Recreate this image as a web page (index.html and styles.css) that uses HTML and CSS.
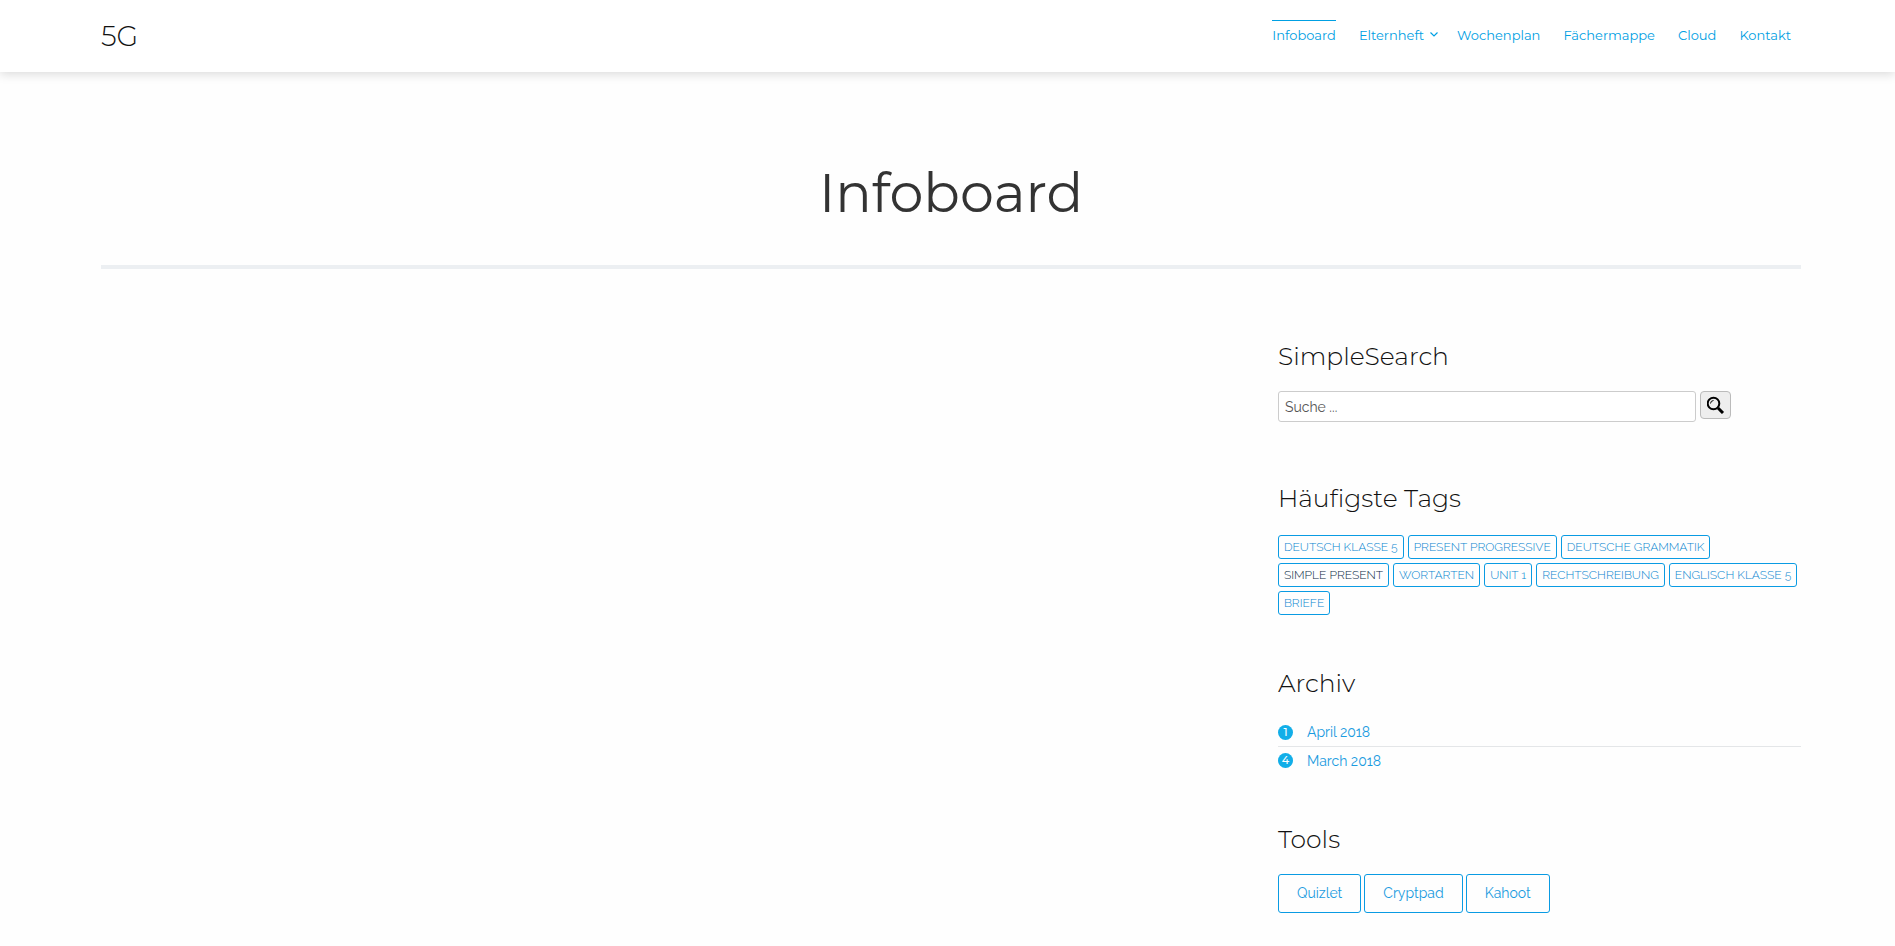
FILE: index.html
```html
<!DOCTYPE html>
<html lang="de">

<head>
  <meta charset="UTF-8" />
  <meta name="viewport" content="width=device-width, initial-scale=1.0" />
  <title>Infoboard - 5G</title>
  <link rel="stylesheet" href="styles.css">
</head>

<body>
  <header class="header">
    <a class="logo" href="#">5G</a>
    <nav class="nav">
      <a class="active" href="#">Infoboard</a>
      <a class="has-menu" href="#">Elternheft
        <svg class="chevron" viewBox="0 0 8 6" width="8" height="6">
          <path d="M.5 .5l3.5 3.5 3.5-3.5" fill="none" stroke="currentColor" stroke-width="1.2" />
        </svg>
      </a>
      <a href="#">Wochenplan</a>
      <a href="#">Fächermappe</a>
      <a href="#">Cloud</a>
      <a href="#">Kontakt</a>
    </nav>
  </header>

  <div class="container">
    <h1 class="page-title">Infoboard</h1>

    <div class="columns">
      <main class="content"></main>

      <aside class="sidebar">
        <section class="widget">
          <h2>SimpleSearch</h2>
          <form class="search">
            <input type="text" placeholder="Suche ..." aria-label="Suche">
            <button type="submit" aria-label="Suchen">
              <svg viewBox="0 0 18 18" width="18" height="18">
                <circle cx="6.5" cy="7.5" r="5.8" fill="none" stroke="#000" stroke-width="2" />
                <path d="M3.5 7.5a3.2 3.2 0 0 1 3-3" fill="none" stroke="#000" stroke-width="1" />
                <path d="M11 12l5 5" stroke="#000" stroke-width="3" />
              </svg>
            </button>
          </form>
        </section>

        <section class="widget">
          <h2>Häufigste Tags</h2>
          <div class="tags">
            <a href="#">Deutsch Klasse 5</a>
            <a href="#">Present Progressive</a>
            <a href="#">Deutsche Grammatik</a>
            <a class="current" href="#">Simple Present</a>
            <a href="#">Wortarten</a>
            <a href="#">Unit 1</a>
            <a href="#">Rechtschreibung</a>
            <a href="#">Englisch Klasse 5</a>
            <a href="#">Briefe</a>
          </div>
        </section>

        <section class="widget">
          <h2>Archiv</h2>
          <ul class="archive">
            <li><span class="count">1</span><a href="#">April 2018</a></li>
            <li><span class="count">4</span><a href="#">March 2018</a></li>
          </ul>
        </section>

        <section class="widget">
          <h2>Tools</h2>
          <div class="tools">
            <a href="#">Quizlet</a>
            <a href="#">Cryptpad</a>
            <a href="#">Kahoot</a>
          </div>
        </section>
      </aside>
    </div>
  </div>
</body>

</html>
```

FILE: styles.css
```css
* {
  box-sizing: border-box;
  margin: 0;
  padding: 0;
}

body {
  background-color: #fefefe;
  color: #111;
  font-family: Raleway, Lato, sans-serif;
  font-size: 14px;
  line-height: 20px;
}

a {
  color: #1a9be0;
  text-decoration: none;
}

.header {
  display: flex;
  justify-content: space-between;
  align-items: center;
  height: 72px;
  padding: 0 104px 0 101px;
  background-color: #fff;
  box-shadow: 0 2px 10px rgba(0, 0, 0, 0.15);
}

.logo {
  color: #111;
  font-family: Montserrat, Inter, sans-serif;
  font-size: 28px;
  font-weight: 300;
}

.nav {
  display: flex;
  gap: 23px;
  padding-bottom: 4px;
  font-family: Montserrat, Inter, sans-serif;
  font-size: 13px;
  line-height: 28px;
}

.nav a {
  color: #00a0e3;
  border-top: 1px solid transparent;
}

.nav a.active {
  border-top-color: #00a0e3;
}

.has-menu {
  display: flex;
  align-items: center;
  gap: 6px;
  margin-right: -4px;
}

.container {
  padding: 0 94px 0 101px;
}

.page-title {
  padding: 81px 0 32px;
  border-bottom: 4px solid #eceff2;
  color: #333;
  font-family: Montserrat, Inter, sans-serif;
  font-size: 54px;
  font-weight: 400;
  line-height: 80px;
  text-align: center;
}

.columns {
  display: grid;
  grid-template-columns: 9fr 4fr;
  padding-top: 71px;
}

.widget + .widget {
  margin-top: 49px;
}

.widget h2 {
  margin-bottom: 19px;
  font-family: Montserrat, Inter, sans-serif;
  font-size: 25px;
  font-variant-ligatures: none;
  font-weight: 300;
  line-height: 32px;
}

.search {
  display: flex;
  align-items: flex-start;
  gap: 4px;
  padding-bottom: 11px;
}

.search input {
  width: 80%;
  height: 31px;
  padding: 0 6px;
  border: 1px solid #ccc;
  border-radius: 3px;
  background-color: #fff;
  font-family: inherit;
  font-size: 14px;
}

.search input::placeholder {
  color: #555;
}

.search button {
  display: flex;
  align-items: center;
  justify-content: center;
  width: 31px;
  height: 28px;
  border: 1px solid #bbb;
  border-radius: 4px;
  background-color: #eee;
  cursor: pointer;
}

.tags {
  display: flex;
  flex-wrap: wrap;
  gap: 4px;
  padding: 2px 0 3px;
}

.tags a {
  padding: 0 5px;
  border: 1px solid #0a9be3;
  border-radius: 3px;
  color: #0a86d0;
  font-size: 12px;
  font-weight: 300;
  line-height: 22px;
  text-transform: uppercase;
}

.tags a.current {
  color: #0a2a44;
}

.archive {
  list-style: none;
}

.archive li {
  display: flex;
  align-items: center;
  gap: 14px;
  height: 28px;
}

.archive li + li {
  border-top: 1px solid #e4e6e8;
}

.count {
  width: 15px;
  border-radius: 50%;
  background-color: #12aee8;
  color: #fff;
  font-family: Montserrat, Inter, sans-serif;
  font-size: 11px;
  font-weight: 500;
  line-height: 15px;
  text-align: center;
}

.tools {
  display: flex;
  gap: 3px;
}

.tools a {
  padding: 0 18px;
  border: 1px solid #0a9be3;
  border-radius: 3px;
  line-height: 37px;
}
```
